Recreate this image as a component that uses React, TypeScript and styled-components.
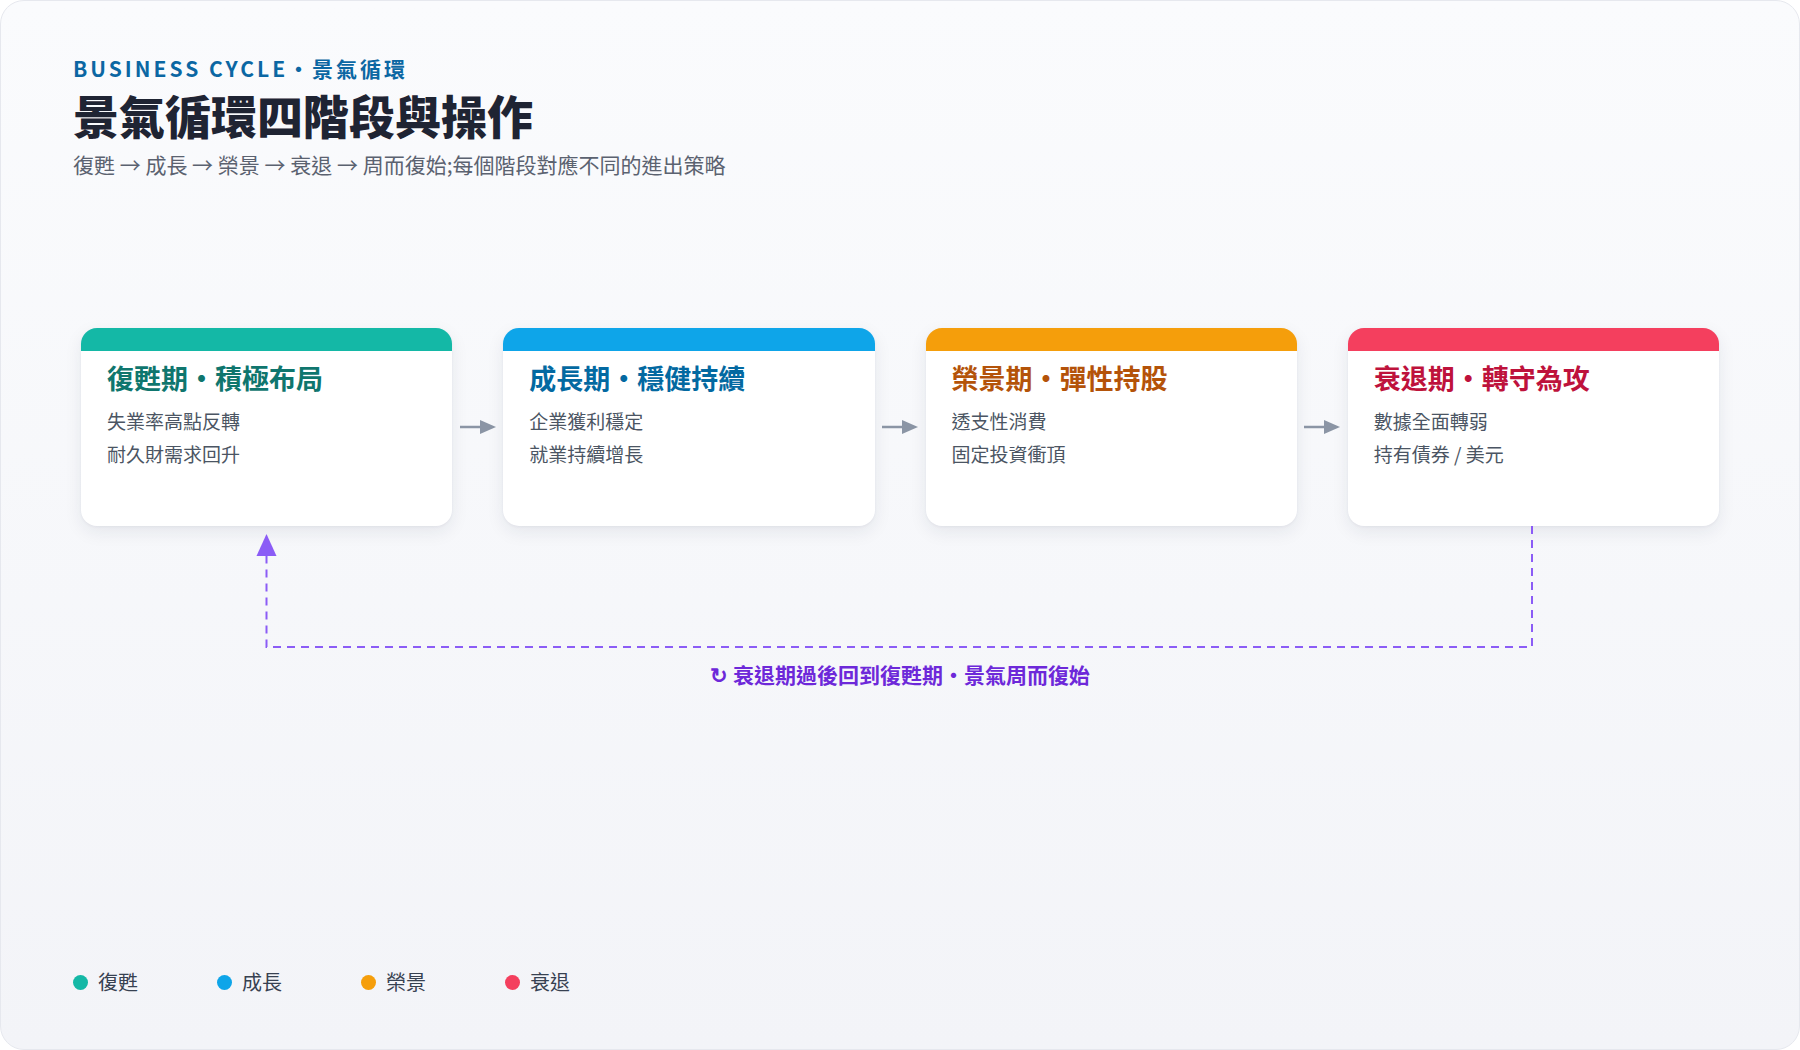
import React from "react";
import styled, {createGlobalStyle} from "styled-components";

const GlobalStyle = createGlobalStyle`
    html, body {
        margin: 0;
        padding: 0;
        background: #ffffff;
    }
    body {
        font-family: "Noto Sans CJK TC", "Noto Sans", sans-serif;
    }
`;

type Stage = {
    title: string;
    lines: string[];
    bar: string;
    ink: string;
    legend: string;
};

const stages: Stage[] = [
    {title: "復甦期・積極布局", lines: ["失業率高點反轉", "耐久財需求回升"], bar: "#14b8a6", ink: "#0f766e", legend: "復甦"},
    {title: "成長期・穩健持續", lines: ["企業獲利穩定", "就業持續增長"], bar: "#0ea5e9", ink: "#0369a1", legend: "成長"},
    {title: "榮景期・彈性持股", lines: ["透支性消費", "固定投資衝頂"], bar: "#f59e0b", ink: "#b45309", legend: "榮景"},
    {title: "衰退期・轉守為攻", lines: ["數據全面轉弱", "持有債券 / 美元"], bar: "#f43f5e", ink: "#be123c", legend: "衰退"},
];

const App: React.FC = () => {
    return (
        <>
            <GlobalStyle/>
            <Frame>
                <Eyebrow>BUSINESS CYCLE・景氣循環</Eyebrow>
                <Title>景氣循環四階段與操作</Title>
                <Subtitle>復甦 → 成長 → 榮景 → 衰退 → 周而復始;每個階段對應不同的進出策略</Subtitle>

                <CardRow>
                    {stages.map((s, i) => (
                        <React.Fragment key={s.title}>
                            {i > 0 && (
                                <Connector>
                                    <svg width="40" height="20" viewBox="0 0 40 20">
                                        <line x1="2" y1="10" x2="24" y2="10" stroke="#8b95a5" strokeWidth="2.5"/>
                                        <polygon points="22,3 38,10 22,17" fill="#8b95a5"/>
                                    </svg>
                                </Connector>
                            )}
                            <Card $bar={s.bar}>
                                <CardTitle $ink={s.ink}>{s.title}</CardTitle>
                                {s.lines.map(l => <CardLine key={l}>{l}</CardLine>)}
                            </Card>
                        </React.Fragment>
                    ))}
                </CardRow>

                <LoopWrap>
                    <svg width="1640" height="126" viewBox="0 0 1640 126">
                        <polyline
                            points="1451,0 1451,121 185.5,121 185.5,26"
                            fill="none"
                            stroke="#8b5cf6"
                            strokeWidth="2"
                            strokeDasharray="8 6"
                        />
                        <polygon points="185.5,8 175.5,30 195.5,30" fill="#8b5cf6"/>
                    </svg>
                </LoopWrap>
                <LoopLabel>↻ 衰退期過後回到復甦期・景氣周而復始</LoopLabel>

                <Legend>
                    {stages.map(s => (
                        <LegendItem key={s.legend}>
                            <Dot $color={s.bar}/>
                            {s.legend}
                        </LegendItem>
                    ))}
                </Legend>
            </Frame>
        </>
    );
};

const Frame = styled.div`
    box-sizing: border-box;
    width: 1800px;
    height: 1050px;
    padding: 54px 72px 54px;
    display: flex;
    flex-direction: column;
    border: 1px solid #e6e8ee;
    border-radius: 24px;
    background: linear-gradient(180deg, #fafbfd 0%, #f3f4f8 100%);
`;

const Eyebrow = styled.div`
    font-size: 21px;
    line-height: 26px;
    font-weight: 700;
    letter-spacing: 3px;
    color: #0b67a3;
`;

const Title = styled.h1`
    margin: 6px 0 0;
    font-size: 46px;
    line-height: 55px;
    font-weight: 800;
    color: #1f2433;
`;

const Subtitle = styled.p`
    margin: 8px 0 0;
    font-size: 21px;
    line-height: 28px;
    color: #5b6270;
`;

const CardRow = styled.div`
    margin: 150px 8px 0;
    display: flex;
    align-items: stretch;
`;

const Card = styled.div<{ $bar: string }>`
    flex: 1;
    height: 198px;
    box-sizing: border-box;
    padding: 10px 26px 0;
    background: #ffffff;
    border-radius: 16px;
    border-top: 23px solid ${p => p.$bar};
    box-shadow: 0 6px 18px rgba(30, 40, 70, 0.08), 0 1px 3px rgba(30, 40, 70, 0.05);
    display: flex;
    flex-direction: column;
`;

const CardTitle = styled.div<{ $ink: string }>`
    font-size: 27px;
    line-height: 34px;
    font-weight: 700;
    color: ${p => p.$ink};
    margin-bottom: 9px;
`;

const CardLine = styled.div`
    font-size: 19px;
    line-height: 33px;
    color: #4b5563;
`;

const Connector = styled.div`
    width: 51px;
    display: flex;
    align-items: center;
    justify-content: center;
`;

const LoopWrap = styled.div`
    margin: 0 8px;
    height: 126px;
    svg {
        display: block;
    }
`;

const LoopLabel = styled.div`
    margin-top: 9px;
    text-align: center;
    font-size: 21px;
    line-height: 26px;
    font-weight: 700;
    color: #6d28d9;
`;

const Legend = styled.div`
    margin-top: auto;
    display: flex;
`;

const LegendItem = styled.div`
    width: 144px;
    display: flex;
    align-items: center;
    gap: 10px;
    font-size: 20px;
    line-height: 26px;
    color: #374151;
`;

const Dot = styled.span<{ $color: string }>`
    width: 15px;
    height: 15px;
    border-radius: 50%;
    background: ${p => p.$color};
`;

export default App;
